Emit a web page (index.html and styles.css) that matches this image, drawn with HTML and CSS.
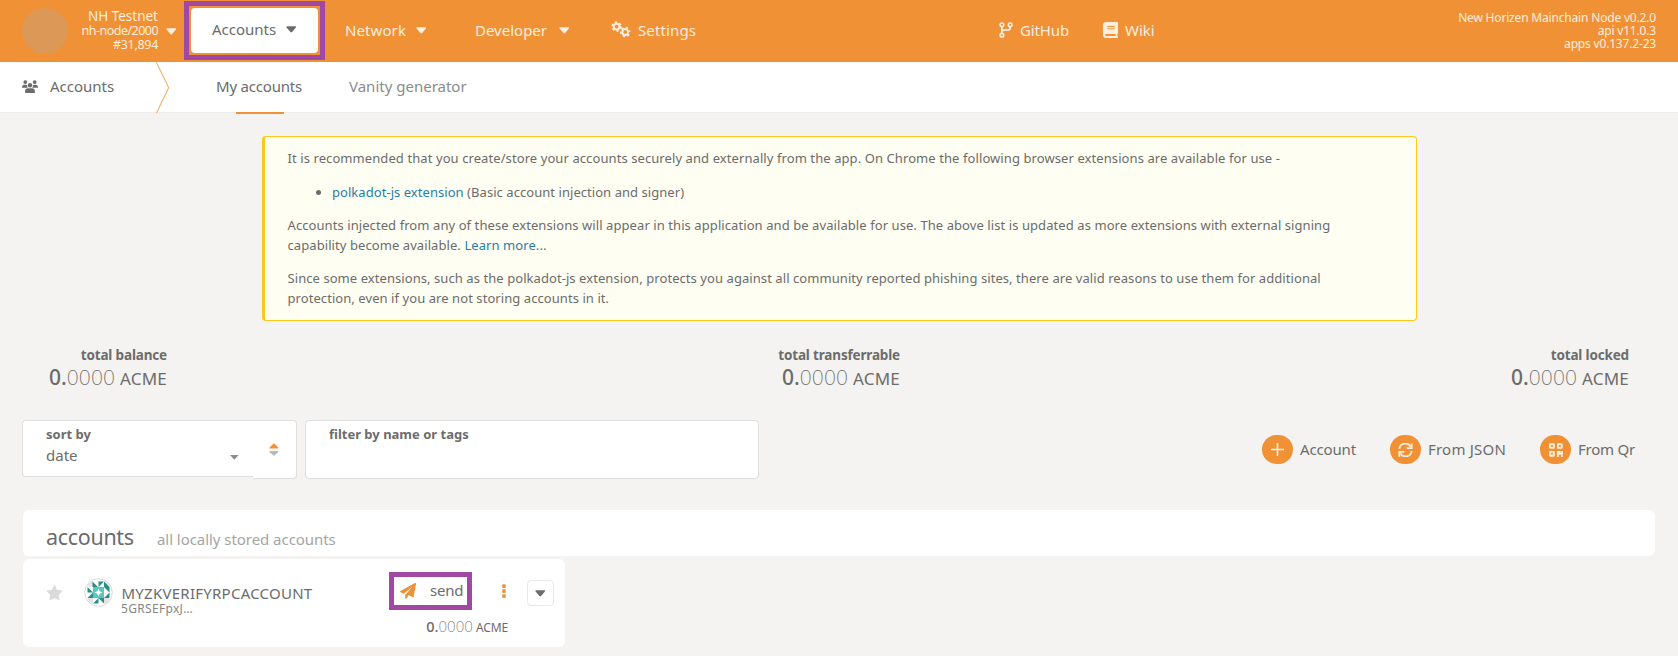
FILE: index.html
```
<!DOCTYPE html>
<html lang="en">
<head>
<meta charset="utf-8">
<title>Accounts</title>
<link rel="stylesheet" href="styles.css">
</head>
<body>
<svg class="defs" aria-hidden="true">
  <symbol id="caret" viewBox="0 0 12 8"><path d="M1.2 .4h9.6q1.4.2.5 1.4L7 6.9q-1 1-2 0L.7 1.8Q-.2.6 1.2.4z"/></symbol>
</svg>
<header class="topbar">
  <div class="chain">
    <span class="chain-logo"></span>
    <div class="chain-info"><span class="chain-name">NH Testnet</span><span class="chain-node">nh-node/2000</span><span class="chain-block">#31,894</span></div>
    <svg class="caret"><use href="#caret"/></svg>
  </div>
  <div class="mark mark-nav">
    <a class="menu-active">Accounts <svg class="caret"><use href="#caret"/></svg></a>
  </div>
  <nav class="menu">
    <a class="menu-network">Network <svg class="caret"><use href="#caret"/></svg></a>
    <a class="menu-developer">Developer <svg class="caret"><use href="#caret"/></svg></a>
    <a class="menu-settings">
      <svg width="20" height="17" viewBox="0 0 20 17" fill="none" stroke="currentColor">
        <circle cx="5.6" cy="5.6" r="2.9" stroke-width="2"/><circle cx="5.6" cy="5.6" r="4.4" stroke-width="1.7" stroke-dasharray="2.3 2.308"/>
        <circle cx="14.2" cy="11" r="2.9" stroke-width="2"/><circle cx="14.2" cy="11" r="4.4" stroke-width="1.7" stroke-dasharray="2.3 2.308" stroke-dashoffset="2.3"/>
      </svg>
      <span>Settings</span></a>
  </nav>
  <nav class="links">
    <a>
      <svg width="14" height="16" viewBox="0 0 14 16" fill="none" stroke="currentColor" stroke-width="1.6"><circle cx="2.9" cy="2.8" r="1.8"/><circle cx="2.9" cy="13.2" r="1.8"/><circle cx="11.1" cy="2.8" r="1.8"/><path d="M2.9 4.6v6.8M11.1 4.6v1.2q0 2.4-2.4 2.4H5.2q-2.3 0-2.3 1.6" stroke-width="1.8"/></svg>
      <span class="github">GitHub</span></a>
    <a class="wiki-link">
      <svg width="15" height="16" viewBox="0 0 15 16" fill="currentColor"><path fill-rule="evenodd" d="M3.3 0H14q1 0 1 1v10q0 .7-.6 1v2q.6.1.6 1t-1 1H3.3Q0 16 0 13V3q0-3 3.3-3zM4.3 4v1h7.4V4zm0 2.3v1h7.4v-1zM3.2 12q-1 0-1 1t1 1h9.3v-2z"/></svg>
      <span>Wiki</span></a>
  </nav>
  <div class="versions"><div>New Horizen Mainchain Node v0.2.0</div><div>api v11.0.3</div><div>apps v0.137.2-23</div></div>
</header>

<div class="tabs">
  <div class="tabs-title">
    <svg width="16" height="13" viewBox="0 0 16 13" fill="currentColor"><circle cx="3.3" cy="2.1" r="1.9"/><circle cx="12.7" cy="2.1" r="1.9"/><circle cx="8" cy="5.2" r="2.2"/><path d="M0 7.5Q0 4.8 2.4 4.8H4q.9 0 1.1.4-.3 1.6.8 2.6H.5Q0 7.8 0 7.5zM16 7.5q0-2.7-2.4-2.7H12q-.9 0-1.1.4.3 1.6-.8 2.6h5.4q.5 0 .5-.3zM3 12.2q0-3.9 3-3.9h4q3 0 3 3.9 0 .8-.8.8H3.8Q3 13 3 12.2z"/></svg>
    <span>Accounts</span>
  </div>
  <svg class="tabs-arrow" width="14" height="51" viewBox="0 0 14 51"><path d="M.5 .5L12.7 25.7.5 51" fill="none" stroke="#f19135" stroke-opacity=".85"/></svg>
  <a class="tab tab-active">My accounts</a>
  <a class="tab">Vanity generator</a>
</div>

<main>
  <article class="notice">
    <p>It is recommended that you create/store your accounts securely and externally from the app. On Chrome the following browser extensions are available for use -</p>
    <ul><li><a>polkadot-js extension</a> (Basic account injection and signer)</li></ul>
    <p class="injected">Accounts injected from any of these extensions will appear in this application and be available for use. The above list is updated as more extensions with external signing<br>capability become available. <a>Learn more...</a></p>
    <p class="since">Since some extensions, such as the polkadot-js extension, protects you against all community reported phishing sites, there are valid reasons to use them for additional<br>protection, even if you are not storing accounts in it.</p>
  </article>

  <section class="summary">
    <div class="stat"><h5>total balance</h5><div class="amount"><b>0.</b><i>0000</i><span>ACME</span></div></div>
    <div class="stat stat-transferrable"><h5>total transferrable</h5><div class="amount"><b>0.</b><i>0000</i><span>ACME</span></div></div>
    <div class="stat"><h5>total locked</h5><div class="amount"><b>0.</b><i>0000</i><span>ACME</span></div></div>
  </section>

  <section class="controls">
    <div class="sort">
      <div class="sort-select"><label>sort by</label><div class="sort-value"><span>date</span><svg width="9" height="5" viewBox="0 0 9 5"><path d="M0 0h8.6L4.3 4.8z" fill="#8c8c8c"/></svg></div></div>
      <div class="sort-order"><svg width="10" height="14" viewBox="0 0 10 14"><path d="M5 .3L9 4.2q.7 1.2-.6 1.2H1.2Q0 5.4.7 4.2z" fill="#f19135"/><path d="M5 13L9 9.3Q9.700 8 8.400 8H1.200Q0 8 .7 9.300z" fill="#b9b9b9"/></svg></div>
    </div>
    <div class="filter"><label>filter by name or tags</label></div>
    <div class="buttons">
      <a class="btn-account"><span class="disc"><svg width="13" height="13" viewBox="0 0 13 13"><path d="M6.500 0v13M0 6.500h13" stroke="#fff" stroke-opacity=".9" stroke-width="1.500"/></svg></span><span>Account</span></a>
      <a class="btn-json"><span class="disc"><svg width="15" height="14" viewBox="0 0 15 14" fill="none" stroke="#fdeedf" stroke-width="1.800"><path d="M1.400 6A6 6 0 0 1 12.600 3.600M13.600 8A6 6 0 0 1 2.400 10.400"/><path d="M13.700 .2v4.900H8.800M1.300 13.800V8.900h4.900"/></svg></span><span>From JSON</span></a>
      <a class="btn-qr"><span class="disc"><svg width="14" height="14" viewBox="0 0 14 14" fill="none" stroke="#fdeedf" stroke-width="1.900"><rect x="1.100" y="1.100" width="3.800" height="3.800" rx=".4"/><rect x="8.900" y="1.100" width="3.800" height="3.800" rx=".4"/><rect x="1.100" y="8.900" width="3.800" height="3.800" rx=".4"/><path d="M8.900 14V8.900h2v2h2.200V8M12 13.200h1.800"/></svg></span><span>From Qr</span></a>
    </div>
  </section>

  <section class="list-head"><h1>accounts</h1><span>all locally stored accounts</span></section>

  <section class="account">
    <svg class="star" width="17" height="16" viewBox="0 0 17 16"><path d="M8.500 .8l2.200 4.600 5 .7-3.700 3.600.9 5-4.400-2.400-4.400 2.400.9-5L1.300 6.100l5-.7z" fill="#dadada" stroke="#dadada" stroke-width="1.200" stroke-linejoin="round"/></svg>
    <svg class="identicon" width="29" height="29" viewBox="0 0 29 29">
      <circle cx="14.500" cy="14.500" r="13.800" fill="#fff" stroke="#d9d9d9"/>
      <g fill="#e3e3e3"><path d="M5 5l4-2v5.500H3.500zM20 3l4 2 2 4h-6zM3.500 20H9v6l-4-2zM20 20h5.500L24 24l-4 2z"/></g>
      <rect x="9" y="9" width="11" height="11" fill="#5ac7bf"/>
      <path d="M14.500 10.500l1.200 2.800 2.800 1.200-2.800 1.200-1.200 2.800-1.200-2.800-2.800-1.200 2.800-1.200z" fill="#fff"/>
      <g fill="#2b8d88"><path d="M8.500 3.500v5.500h5.500zM14.500 3.500h5.500l-5.500 5.500zM20 9V3.500L25.500 9v5.500zM25.500 14.500V20H20zM20 25.500V20h-5.500zM14.500 20v5.500H9zM9 20H3.500l5.500-5.500zM3.500 14.500V9L9 14.500z"/></g>
    </svg>
    <div class="who"><div class="name">MYZKVERIFYRPCACCOUNT</div><div class="address">5GRSEFpxJ…</div></div>
    <div class="account-side">
      <div class="actions">
        <a class="mark mark-send"><svg width="16" height="16" viewBox="0 0 16 16" fill="#f19135"><path d="M15.700 .2q.4.300.3.800l-2.300 12.600q-.200.800-1 .5L8.500 12.300 6.400 15.400q-.3.500-.8.300t-.5-.8v-3L12.600 3.500 4 10.700.5 9.300q-1.100-.6 0-1.200L14.900.1q.5-.2.8.1z"/></svg><span>send</span></a>
        <svg class="dots" width="4" height="15" viewBox="0 0 4 15" fill="#f19135"><rect x=".2" y=".3" width="3.600" height="3.600" rx="1.200"/><rect x=".2" y="5.300" width="3.600" height="3.600" rx="1.200"/><rect x=".2" y="10.300" width="3.600" height="3.600" rx="1.200"/></svg>
        <a class="expand"><svg class="caret"><use href="#caret"/></svg></a>
      </div>
      <div class="amount amount-small"><b>0.</b><i>0000</i><span>ACME</span></div>
    </div>
  </section>
</main>
</body>
</html>
```
FILE: styles.css
```
* { box-sizing: border-box; }
body { margin: 0; height: 656px; overflow: hidden; background: #f4f3f1; color: #6c6c6c; font: 15px/20px "Noto Sans", "Open Sans", sans-serif; }
svg { display: block; flex: none; }
p, h1, h5, ul { margin: 0; }
.defs { position: absolute; width: 0; height: 0; }
.caret { width: 10.500px; height: 7px; fill: currentColor; margin-top: 1px; }

.topbar { display: flex; height: 62px; background: #f19135; color: #fdeedf; }
.chain { display: flex; align-items: center; width: 184px; padding-left: 22px; }
.chain-logo { width: 46px; height: 46px; border-radius: 50%; background: #dc9856; flex: none; }
.chain-info { display: flex; flex-direction: column; width: 90px; text-align: right; line-height: 14.500px; font-size: 12.500px; }
.chain-name { font-size: 13.500px; }
.chain-node { letter-spacing: -.53px; }
.chain-block { letter-spacing: -.31px; }
.chain .caret { margin-left: 8px; }

.mark { border: 5px solid #a148a3; }
.mark-nav { width: 141px; height: 59px; margin-top: 1px; padding: 2px; }
.menu-active { display: flex; align-items: center; gap: 10px; height: 45px; padding: 0 0 3px 21px; background: #fff; color: #6c6c6c; border-radius: 4px; }
.menu { display: flex; height: 59px; align-items: center; width: 674px; padding-left: 20px; }
.menu a { display: flex; align-items: center; gap: 10px; }
.menu .menu-network { width: 130px; letter-spacing: .09px; }
.menu .menu-developer { width: 136px; gap: 12px; }
.menu .menu-settings { gap: 7px; letter-spacing: .12px; }
.links { display: flex; height: 59px; align-items: center; gap: 34px; }
.links a { display: flex; align-items: center; gap: 7px; }
.github { letter-spacing: -.14px; }
.versions { margin-left: auto; padding: 11px 22px 0 0; text-align: right; font-size: 12px; line-height: 13px; letter-spacing: -.18px; }

.tabs { display: flex; height: 51px; background: #fff; border-bottom: 1px solid #ececea; }
.tabs-title { display: flex; align-items: center; gap: 12px; width: 156px; padding: 0 0 2px 22px; }
.tab { display: flex; align-items: center; height: 52px; padding-bottom: 5px; color: #8b8b8b; flex: none; white-space: nowrap; }
.tab-active { position: relative; margin: 0 47px 0 46px; width: 86px; color: #6c6c6c; letter-spacing: -.2px; }
.tab-active::after { content: ""; position: absolute; left: 20px; bottom: 0; width: 48px; height: 2px; background: #f19135; }

main { padding: 23px 23px 0; }
.notice { width: 1155px; height: 185px; margin-left: 239px; padding: 11px 20px 0 22.500px; border: 1px solid #fcc81c; border-left-width: 3px; border-radius: 4px; background: #fffef2; font-size: 13px; letter-spacing: .085px; white-space: nowrap; }
.notice a { color: #1f7fa9; }
.notice ul { margin: 14px 0 13px; padding-left: 44.500px; letter-spacing: .05px; }
.notice .injected { margin-bottom: 13px; letter-spacing: .078px; }
.notice .since { letter-spacing: .068px; }

.summary { display: flex; margin-top: 23px; height: 76px; }
.stat { width: 144px; text-align: right; margin-right: auto; }
.stat:last-child { margin-right: 26px; }
.stat-transferrable { margin-left: 4px; }
h5 { font-size: 13.500px; font-weight: 700; line-height: 22px; letter-spacing: -.16px; }
.amount { display: flex; justify-content: flex-end; align-items: baseline; line-height: 22px; }
.amount b { font-size: 21px; font-weight: 500; }
.amount i { font-size: 21px; font-weight: 200; font-style: normal; letter-spacing: .1px; }
.amount span { font-size: 17px; letter-spacing: .2px; margin-left: 5px; }

.controls { display: flex; height: 90px; margin-left: -1px; }
label { display: block; font-size: 13px; font-weight: 700; line-height: 18px; }
.sort { display: flex; width: 275px; }
.sort-select { width: 231px; height: 57px; padding: 4px 14px 0 23px; border: 1px solid #dedede; border-right: 0; border-radius: 4px 0 0 4px; background: #fff; }
.sort-value { display: flex; align-items: center; justify-content: space-between; line-height: 24px; }
.sort-value svg { margin-top: 4px; }
.sort-order { display: flex; align-items: center; width: 44px; height: 59px; padding-left: 16px; border: 1px solid #dedede; border-left: 0; border-radius: 0 4px 4px 0; background: #fff; }
.filter { width: 454px; height: 59px; margin-left: 8px; padding: 4px 23px; border: 1px solid #dedede; border-radius: 4px; background: #fff; }
.buttons { display: flex; height: 59px; align-items: center; margin-left: auto; padding-right: 20px; gap: 34px; }
.buttons a { display: flex; align-items: center; gap: 7px; }
.buttons a > span:last-child { margin-bottom: 2px; }
.btn-account { letter-spacing: -.15px; }
.btn-json { letter-spacing: .21px; }
.btn-qr { letter-spacing: -.23px; }
.disc { display: flex; align-items: center; justify-content: center; width: 31px; height: 29px; border-radius: 15px; background: #f19135; }

.list-head { display: flex; align-items: baseline; height: 46px; padding: 10px 23px 0; background: #fff; border-radius: 6px; }
h1 { font-size: 21.500px; font-weight: 400; line-height: 34px; letter-spacing: -.32px; width: 111px; }
.list-head span { color: #a5a5a5; letter-spacing: -.05px; }

.account { display: flex; width: 542px; height: 88px; margin-top: 3px; padding-left: 23px; background: #fff; border-radius: 6px; }
.star { margin-top: 26px; }
.identicon { margin: 19px 9px 0 21px; }
.who { width: 225px; padding-top: 25px; flex: none; }
.name { line-height: 19px; letter-spacing: .25px; margin-left: -.5px; }
.address { font-size: 12px; line-height: 12px; letter-spacing: .32px; color: #858585; margin-left: -1px; }
.account-side { padding: 13px 11px 0 0; flex: 1; }
.actions { display: flex; align-items: center; justify-content: flex-end; height: 38px; }
.mark-send { display: flex; align-items: center; width: 83px; height: 38px; padding-left: 6px; gap: 14px; letter-spacing: -.25px; }
.mark-send span { margin-bottom: 2px; }
.dots { margin: 0 21px 0 30px; }
.expand { display: flex; align-items: center; justify-content: center; width: 27px; height: 26px; margin-top: 4px; border: 1px solid #e8e8e8; border-radius: 4px; }
.amount-small { padding-right: 46px; margin-top: 5px; }
.amount-small b { font-size: 14.500px; }
.amount-small i { font-size: 15px; }
.amount-small span { font-size: 12px; letter-spacing: -.14px; margin-left: 3px; }
```
